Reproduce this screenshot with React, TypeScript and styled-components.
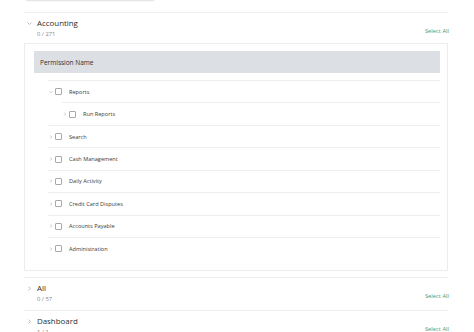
import React from 'react';
import styled, { createGlobalStyle } from 'styled-components';

const GlobalStyle = createGlobalStyle`
  html, body {
    margin: 0;
    padding: 0;
    background: #ffffff;
    font-family: 'Open Sans', 'Liberation Sans', sans-serif;
    color: #333;
    overflow: hidden;
  }
  * { box-sizing: border-box; }
`;

interface Permission {
  name: string;
  level: number;
  expanded?: boolean;
}

interface Group {
  title: string;
  selected: number;
  total: number;
  open: boolean;
}

const permissions: Permission[] = [
  { name: 'Reports', level: 0, expanded: true },
  { name: 'Run Reports', level: 1 },
  { name: 'Search', level: 0 },
  { name: 'Cash Management', level: 0 },
  { name: 'Daily Activity', level: 0 },
  { name: 'Credit Card Disputes', level: 0 },
  { name: 'Accounts Payable', level: 0 },
  { name: 'Administration', level: 0 },
];

const groups: Group[] = [
  { title: 'Accounting', selected: 0, total: 271, open: true },
  { title: 'All', selected: 0, total: 57, open: false },
  { title: 'Dashboard', selected: 1, total: 1, open: false },
];

const Page = styled.div`
  width: 424px;
  margin-left: 24px;
`;

const SearchBox = styled.div`
  width: 130px;
  height: 20px;
  margin: -19px 0 11px 1px;
  border: 1px solid #e6e6e6;
  border-radius: 2px;
  box-shadow: 0 1px 1px rgba(0, 0, 0, 0.03);
`;

const Section = styled.section`
  border-top: 1px solid #ededed;
  padding: 5px 0 6px;
`;

const SectionHeader = styled.div`
  display: flex;
  align-items: flex-end;
  justify-content: space-between;
`;

const HeaderLeft = styled.div`
  display: flex;
  align-items: flex-start;
`;

const Toggle = styled.span`
  width: 13px;
  height: 11px;
  display: flex;
  align-items: center;
  justify-content: center;
  padding-right: 2px;
`;

const TitleBlock = styled.div`
  display: flex;
  flex-direction: column;
`;

const Title = styled.div`
  font-size: 7.9px;
  line-height: 11px;
  color: #2e2e2e;
`;

const Count = styled.div`
  font-size: 5.8px;
  line-height: 10px;
  color: #858585;
`;

const SelectAll = styled.button`
  background: none;
  border: none;
  padding: 0;
  margin: 0 -1px 4px 0;
  font-family: inherit;
  font-size: 5.8px;
  line-height: 8px;
  color: #3f9a72;
  cursor: pointer;
`;

const Panel = styled.div`
  margin-top: 4px;
  border: 1px solid #ececec;
  padding: 7px 7px 10px 9px;
`;

const TableHead = styled.div`
  height: 22px;
  background: #dcdfe3;
  display: flex;
  align-items: center;
  padding-left: 6px;
  font-size: 6.5px;
  color: #2e2e2e;
`;

const Tree = styled.div`
  margin: 7px 0 0 14px;
`;

const Row = styled.div<{ $level: number }>`
  height: 22.45px;
  margin-left: ${(p) => p.$level * 14}px;
  border-top: 1px solid #eeeeee;
  display: flex;
  align-items: center;
  font-size: 5.6px;
  color: #3a3a3a;
`;

const Caret = styled.span`
  width: 7px;
  height: 7px;
  display: flex;
  align-items: center;
  justify-content: center;
  margin-left: -1px;
`;

const Box = styled.span`
  width: 7px;
  height: 7px;
  border: 1px solid #a9a9a9;
  border-radius: 1px;
  background: #fff;
  margin: 0 7px 0 1px;
`;

const Chevron: React.FC<{ down?: boolean; size?: number }> = ({ down, size = 4 }) => (
  <svg width={size} height={size} viewBox="0 0 8 8" fill="none">
    {down ? (
      <polyline points="1,2.5 4,5.5 7,2.5" stroke="#9a9a9a" strokeWidth="1.1" />
    ) : (
      <polyline points="2.5,1 5.5,4 2.5,7" stroke="#9a9a9a" strokeWidth="1.1" />
    )}
  </svg>
);

const App: React.FC = () => {
  return (
    <>
      <GlobalStyle />
      <Page>
        <SearchBox />
        {groups.map((g) => (
          <Section key={g.title}>
            <SectionHeader>
              <HeaderLeft>
                <Toggle>
                  <Chevron down={g.open} size={5} />
                </Toggle>
                <TitleBlock>
                  <Title>{g.title}</Title>
                  <Count>
                    {g.selected} / {g.total}
                  </Count>
                </TitleBlock>
              </HeaderLeft>
              <SelectAll>Select All</SelectAll>
            </SectionHeader>
            {g.open && (
              <Panel>
                <TableHead>Permission Name</TableHead>
                <Tree>
                  {permissions.map((p) => (
                    <Row key={p.name} $level={p.level}>
                      <Caret>
                        <Chevron down={p.expanded} />
                      </Caret>
                      <Box />
                      {p.name}
                    </Row>
                  ))}
                </Tree>
              </Panel>
            )}
          </Section>
        ))}
      </Page>
    </>
  );
};

export default App;
